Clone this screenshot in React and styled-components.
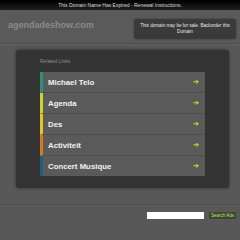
import styled, { createGlobalStyle } from "styled-components";

const links = [
  { label: "Michael Telo", accent: "#2f8f7a" },
  { label: "Agenda", accent: "#c8d42a" },
  { label: "Des", accent: "#e0c81e" },
  { label: "Activiteit", accent: "#d9781e" },
  { label: "Concert Musique", accent: "#1f5f78" },
];

function App() {
  return (
    <>
      <GlobalStyle />
      <TopBar>This Domain Name Has Expired - Renewal Instructions.</TopBar>
      <Header>
        <Domain>agendadeshow.com</Domain>
        <SaleBox>This domain may be for sale. Backorder this Domain</SaleBox>
      </Header>
      <Main>
        <Panel>
          <PanelTitle>Related Links</PanelTitle>
          <LinkList>
            {links.map((l) => (
              <LinkRow key={l.label} $accent={l.accent}>
                <span>{l.label}</span>
                <Arrow>➔</Arrow>
              </LinkRow>
            ))}
          </LinkList>
        </Panel>
      </Main>
      <Footer>
        <SearchInput />
        <SearchButton>Search Ads</SearchButton>
      </Footer>
    </>
  );
}

const GlobalStyle = createGlobalStyle`
  body {
    margin: 0;
    background: #585858;
    font-family: "Liberation Sans", Arial, sans-serif;
  }
`;

const TopBar = styled.div`
  height: 10px;
  background: linear-gradient(#000, #1e1e1e);
  color: #ddd;
  font-size: 5px;
  line-height: 11px;
  text-align: center;
`;

const Header = styled.div`
  height: 33px;
  padding: 0 4px 0 8px;
  display: flex;
  justify-content: space-between;
  align-items: center;
  background: #5a5a5a;
  border-bottom: 1px solid #4c4c4c;
  box-shadow: 0 1px 0 #626262;
`;

const Domain = styled.div`
  color: #8a8a8a;
  font-size: 9px;
  font-weight: bold;
  margin-top: -4px;
`;

const SaleBox = styled.div`
  width: 92px;
  height: 20px;
  padding: 0 5px;
  margin-top: 4px;
  display: flex;
  align-items: center;
  justify-content: center;
  text-align: center;
  background: #3a3a3a;
  border-radius: 3px;
  box-shadow: 0 0 2px #333;
  color: #e6e6e6;
  font-size: 4.6px;
  line-height: 6px;
`;

const Main = styled.div`
  padding: 6px 11px 0 16px;
  height: 154px;
  border-bottom: 1px solid #4c4c4c;
  box-shadow: 0 1px 0 #626262;
`;

const Panel = styled.div`
  height: 130px;
  padding: 8px 24px 0 24px;
  background: #333;
  border-radius: 3px;
  box-shadow: 0 0 3px #2a2a2a;
`;

const PanelTitle = styled.div`
  color: #8f8f8f;
  font-size: 5px;
  height: 14px;
`;

const LinkList = styled.div`
  background: #5a5a5a;
`;

const LinkRow = styled.div`
  height: 20px;
  display: flex;
  align-items: center;
  justify-content: space-between;
  padding: 0 6px 0 5px;
  border-left: 3px solid ${(p) => p.$accent};
  border-bottom: 1px solid #4e4e4e;
  color: #f2f2f2;
  font-size: 7.8px;
  font-weight: bold;
  &:last-child {
    border-bottom: none;
  }
`;

const Arrow = styled.span`
  color: #a8d21e;
  font-size: 7px;
`;

const Footer = styled.div`
  display: flex;
  justify-content: flex-end;
  align-items: center;
  gap: 5px;
  padding: 7px 4px 0 0;
`;

const SearchInput = styled.div`
  width: 57px;
  height: 7px;
  background: #fff;
`;

const SearchButton = styled.div`
  width: 27px;
  height: 7px;
  background: #3b4a22;
  color: #c8d8a0;
  font-size: 4.5px;
  line-height: 7px;
  text-align: center;
`;

export default App;
